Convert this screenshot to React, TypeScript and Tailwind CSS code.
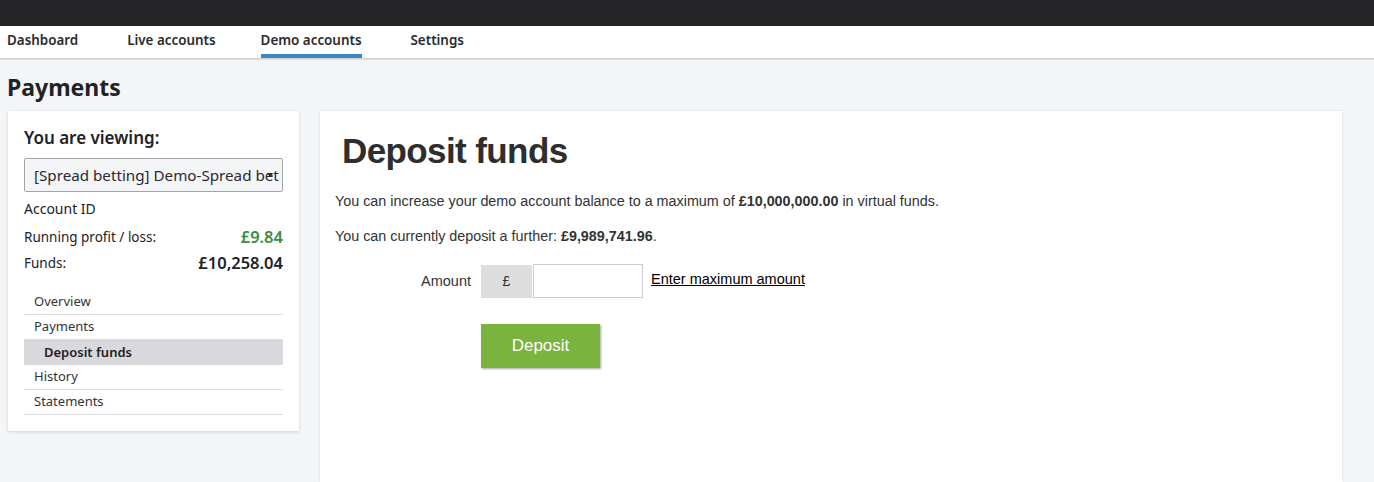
import React from "react";

const nav = ["Dashboard", "Live accounts", "Demo accounts", "Settings"];

export default function App() {
  return (
    <div className="w-[1374px] h-[482px] overflow-hidden bg-[#f4f5f7] flex flex-col" style={{ fontFamily: '"Open Sans", "Noto Sans", sans-serif' }}>
      <div className="h-[26px] bg-[#262628] shrink-0" />
      <div className="h-[33px] bg-white border-b border-[#cfcfd2] shadow-[0_1px_1px_rgba(0,0,0,0.08)] flex items-stretch pl-[7px] shrink-0">
        {nav.map((n, i) => (
          <div
            key={n}
            className={`flex items-center text-[13.4px] font-semibold text-[#2a2a2e] border-b-[4px] ${i === 2 ? "border-[#3a86c8]" : "border-transparent"} ${i === 0 ? "mr-[49px]" : i === 1 ? "mr-[45px]" : i === 2 ? "mr-[49px]" : ""}`}
            style={{ fontFamily: '"Noto Sans", "Open Sans", sans-serif' }}
          >
            <span className="pt-[1px]">{n}</span>
          </div>
        ))}
      </div>
      <div className="pl-[7px] pt-[14px] h-[52px] shrink-0">
        <h1 className="text-[23px] font-bold text-[#222226] leading-[28px]" style={{ fontFamily: '"Noto Sans", sans-serif' }}>Payments</h1>
      </div>
      <div className="flex items-start gap-[21px] pl-[8px] flex-1">
        <div className="w-[291px] bg-white shadow-[0_1px_3px_rgba(0,0,0,0.15)] px-[16px] pt-[16px] pb-[16px] text-[#222226]" style={{ fontFamily: '"Noto Sans", sans-serif' }}>
          <div className="text-[17px] font-semibold leading-[22px]">You are viewing:</div>
          <div className="relative mt-[9px] h-[34px] border border-[#a4a4ac] rounded-[2px] bg-[#f4f5f7] flex items-center pl-[9px] text-[15.2px] overflow-hidden whitespace-nowrap text-[#2a2a30]">
            [Spread betting] Demo-Spread bet
            <svg className="absolute right-[9px] top-[14px]" width="6" height="4" viewBox="0 0 6 4">
              <path d="M0 0 L6 0 L3 4 Z" fill="#2a2a30" />
            </svg>
          </div>
          <div className="mt-[8px] text-[14px] leading-[18px]">Account ID</div>
          <div className="mt-[10px] flex justify-between items-center text-[13.5px] leading-[18px]">
            <span>Running profit / loss:</span>
            <span className="text-[16.5px] font-semibold text-[#3c8c45]">£9.84</span>
          </div>
          <div className="mt-[8px] flex justify-between items-center text-[13.5px] leading-[18px]">
            <span>Funds:</span>
            <span className="text-[16.5px] font-semibold">£10,258.04</span>
          </div>
          <div className="mt-[18px] text-[13px] text-[#333338]">
            {[
              ["Overview", false],
              ["Payments", false],
              ["Deposit funds", true],
              ["History", false],
              ["Statements", false],
            ].map(([t, a]) => (
              <div
                key={t as string}
                className={`h-[25px] flex items-center ${a ? "bg-[#d9d9dd] pl-[20px] font-semibold text-[#222226]" : "pl-[10px] border-b border-[#dcdcdf]"}`}
              >
                {t}
              </div>
            ))}
          </div>
        </div>
        <div className="w-[1022px] self-stretch bg-white shadow-[0_0_2px_rgba(0,0,0,0.12)] pl-[15px] pt-[20px] text-[#333333]" style={{ fontFamily: '"Liberation Sans", Arial, sans-serif' }}>
          <h2 className="text-[35px] font-bold leading-[40px] pl-[7px] text-[#2e2e2e] tracking-[-0.6px]">Deposit funds</h2>
          <p className="mt-[20px] text-[14.35px] leading-[20px]">
            You can increase your demo account balance to a maximum of <b>£10,000,000.00</b> in virtual funds.
          </p>
          <p className="mt-[15px] text-[14.35px] leading-[20px]">
            You can currently deposit a further: <b>£9,989,741.96</b>.
          </p>
          <div className="mt-[18px] flex items-center">
            <div className="w-[136px] text-right text-[14.5px] pt-[1px]">Amount</div>
            <div className="ml-[10px] w-[51px] h-[33px] bg-[#dddddd] flex items-center justify-center text-[14px]">£</div>
            <div className="ml-[1px] w-[110px] h-[34px] border border-[#cccccc] bg-white" />
            <a className="ml-[8px] text-[14.5px] text-black underline self-start mt-[5px]">Enter maximum amount</a>
          </div>
          <div className="mt-[26px] ml-[146px] w-[119px] h-[44px] bg-[#7ab33e] shadow-[1px_1px_2px_rgba(0,0,0,0.35)] flex items-center justify-center text-white text-[17px]">
            Deposit
          </div>
        </div>
      </div>
    </div>
  );
}
